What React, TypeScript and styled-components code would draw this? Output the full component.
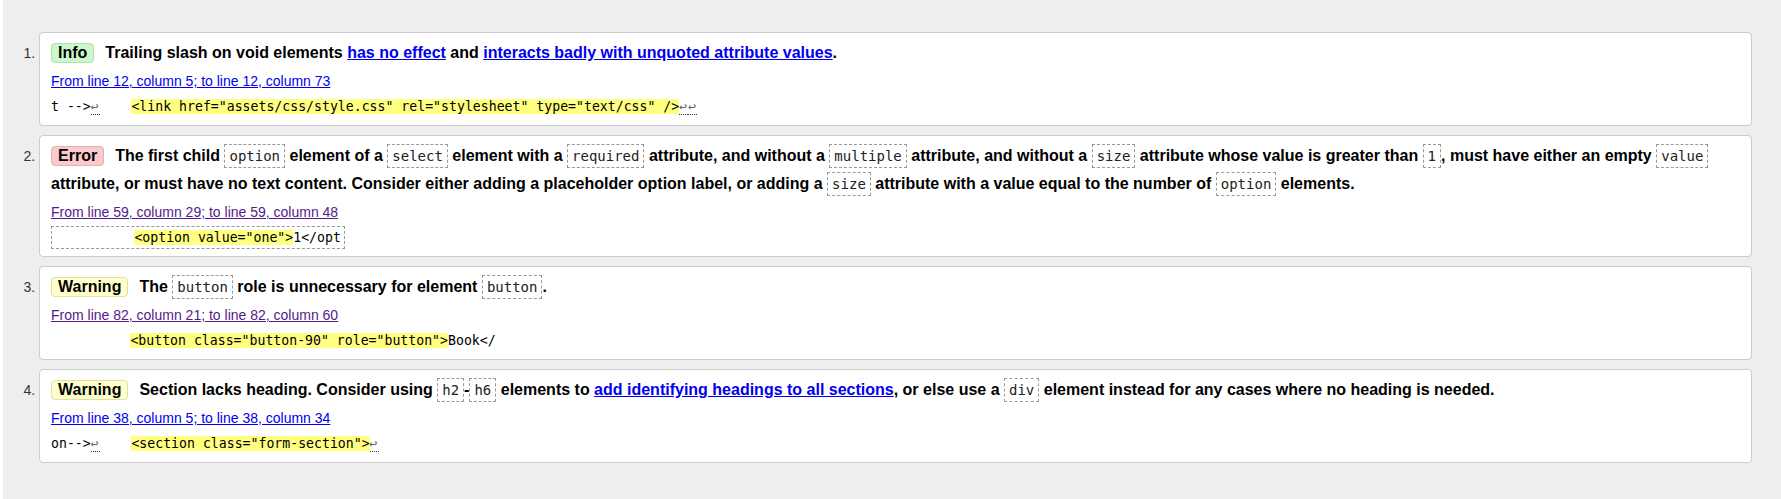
import React from 'react';
import styled, { createGlobalStyle } from 'styled-components';

type Kind = 'info' | 'error' | 'warning';

const badgeColors: Record<Kind, { bg: string; border: string }> = {
  info: { bg: '#ccf7cc', border: '#b3dfb3' },
  error: { bg: '#fbcaca', border: '#e6b0b0' },
  warning: { bg: '#ffffcc', border: '#e2dfa6' },
};

const GlobalStyle = createGlobalStyle`
  html, body { margin: 0; padding: 0; background: #fff; }
  body { font-family: "Liberation Sans", Arial, sans-serif; }
`;

const Page = styled.main`
  margin-left: 3px;
  min-height: 100vh;
  box-sizing: border-box;
  background: #eee;
  padding: 32px 29px 20px 36px;
`;

const MessageList = styled.ol`
  margin: 0;
  padding: 0;
  list-style: decimal outside;
`;

const Message = styled.li`
  background: #fff;
  border: 1px solid #ccc;
  border-radius: 4px;
  padding: 6px 11px;
  margin-bottom: 9px;
  &::marker {
    font-size: 14px;
    color: #333;
  }
`;

const Summary = styled.p`
  margin: 0;
  font-size: 16px;
  font-weight: bold;
  line-height: 28px;
  color: #000;
`;

const Badge = styled.strong<{ $kind: Kind }>`
  display: inline-block;
  line-height: 18px;
  padding: 0 6px;
  margin-right: 11px;
  border-radius: 4px;
  background: ${({ $kind }) => badgeColors[$kind].bg};
  border: 1px solid ${({ $kind }) => badgeColors[$kind].border};
`;

const Code = styled.code`
  font-family: "DejaVu Sans Mono", "Liberation Mono", monospace;
  font-size: 14px;
  font-weight: normal;
  color: #222;
  padding: 3px 4px;
  border: 1px dashed #999;
`;

const Link = styled.a<{ $visited?: boolean }>`
  color: ${({ $visited }) => ($visited ? '#551a8b' : '#0000ee')};
  text-decoration: underline;
`;

const Location = styled.p`
  margin: 0;
  font-size: 14px;
  line-height: 28px;
`;

const Extract = styled.p`
  margin: 0;
  line-height: 24px;
  font-family: "DejaVu Sans Mono", "Liberation Mono", monospace;
  font-size: 13.2px;
  white-space: pre;
  color: #000;
`;

const ExtractCode = styled.code<{ $boxed?: boolean }>`
  font-family: inherit;
  ${({ $boxed }) => ($boxed ? 'border: 1px dashed #999; padding: 3px 3px;' : '')}
`;

const Mark = styled.mark`
  background: #ffff80;
  color: inherit;
`;

const LineBreak = styled.b`
  font-weight: normal;
  color: #666;
  padding-right: 1px;
  border-bottom: 1px dotted #333;
`;

const LB = () => <LineBreak title="Line break">↩</LineBreak>;

export default function App() {
  return (
    <>
      <GlobalStyle />
      <Page>
        <MessageList>
          <Message>
            <Summary>
              <Badge $kind="info">Info</Badge>
              Trailing slash on void elements <Link href="#">has no effect</Link> and{' '}
              <Link href="#">interacts badly with unquoted attribute values</Link>.
            </Summary>
            <Location>
              <Link href="#">From line 12, column 5; to line 12, column 73</Link>
            </Location>
            <Extract>
              <ExtractCode>
                t --&gt;<LB />{'    '}
                <Mark>{'<link href="assets/css/style.css" rel="stylesheet" type="text/css" />'}</Mark>
                <LB /><LB />
              </ExtractCode>
            </Extract>
          </Message>

          <Message>
            <Summary>
              <Badge $kind="error">Error</Badge>
              The first child <Code>option</Code> element of a <Code>select</Code> element with a{' '}
              <Code>required</Code> attribute, and without a <Code>multiple</Code> attribute, and
              without a <Code>size</Code> attribute whose value is greater than <Code>1</Code>, must
              have either an empty <Code>value</Code> attribute, or must have no text content.
              Consider either adding a placeholder option label, or adding a <Code>size</Code>{' '}
              attribute with a value equal to the number of <Code>option</Code> elements.
            </Summary>
            <Location>
              <Link href="#" $visited>From line 59, column 29; to line 59, column 48</Link>
            </Location>
            <Extract>
              <ExtractCode $boxed>
                {'          '}
                <Mark>{'<option value="one">'}</Mark>
                {'1</opt'}
              </ExtractCode>
            </Extract>
          </Message>

          <Message>
            <Summary>
              <Badge $kind="warning">Warning</Badge>
              The <Code>button</Code> role is unnecessary for element <Code>button</Code>.
            </Summary>
            <Location>
              <Link href="#" $visited>From line 82, column 21; to line 82, column 60</Link>
            </Location>
            <Extract>
              <ExtractCode>
                {'          '}
                <Mark>{'<button class="button-90" role="button">'}</Mark>
                {'Book</'}
              </ExtractCode>
            </Extract>
          </Message>

          <Message>
            <Summary>
              <Badge $kind="warning">Warning</Badge>
              Section lacks heading. Consider using <Code>h2</Code>-<Code>h6</Code> elements to{' '}
              <Link href="#">add identifying headings to all sections</Link>, or else use a{' '}
              <Code>div</Code> element instead for any cases where no heading is needed.
            </Summary>
            <Location>
              <Link href="#">From line 38, column 5; to line 38, column 34</Link>
            </Location>
            <Extract>
              <ExtractCode>
                on--&gt;<LB />{'    '}
                <Mark>{'<section class="form-section">'}</Mark>
                <LB />
              </ExtractCode>
            </Extract>
          </Message>
        </MessageList>
      </Page>
    </>
  );
}
